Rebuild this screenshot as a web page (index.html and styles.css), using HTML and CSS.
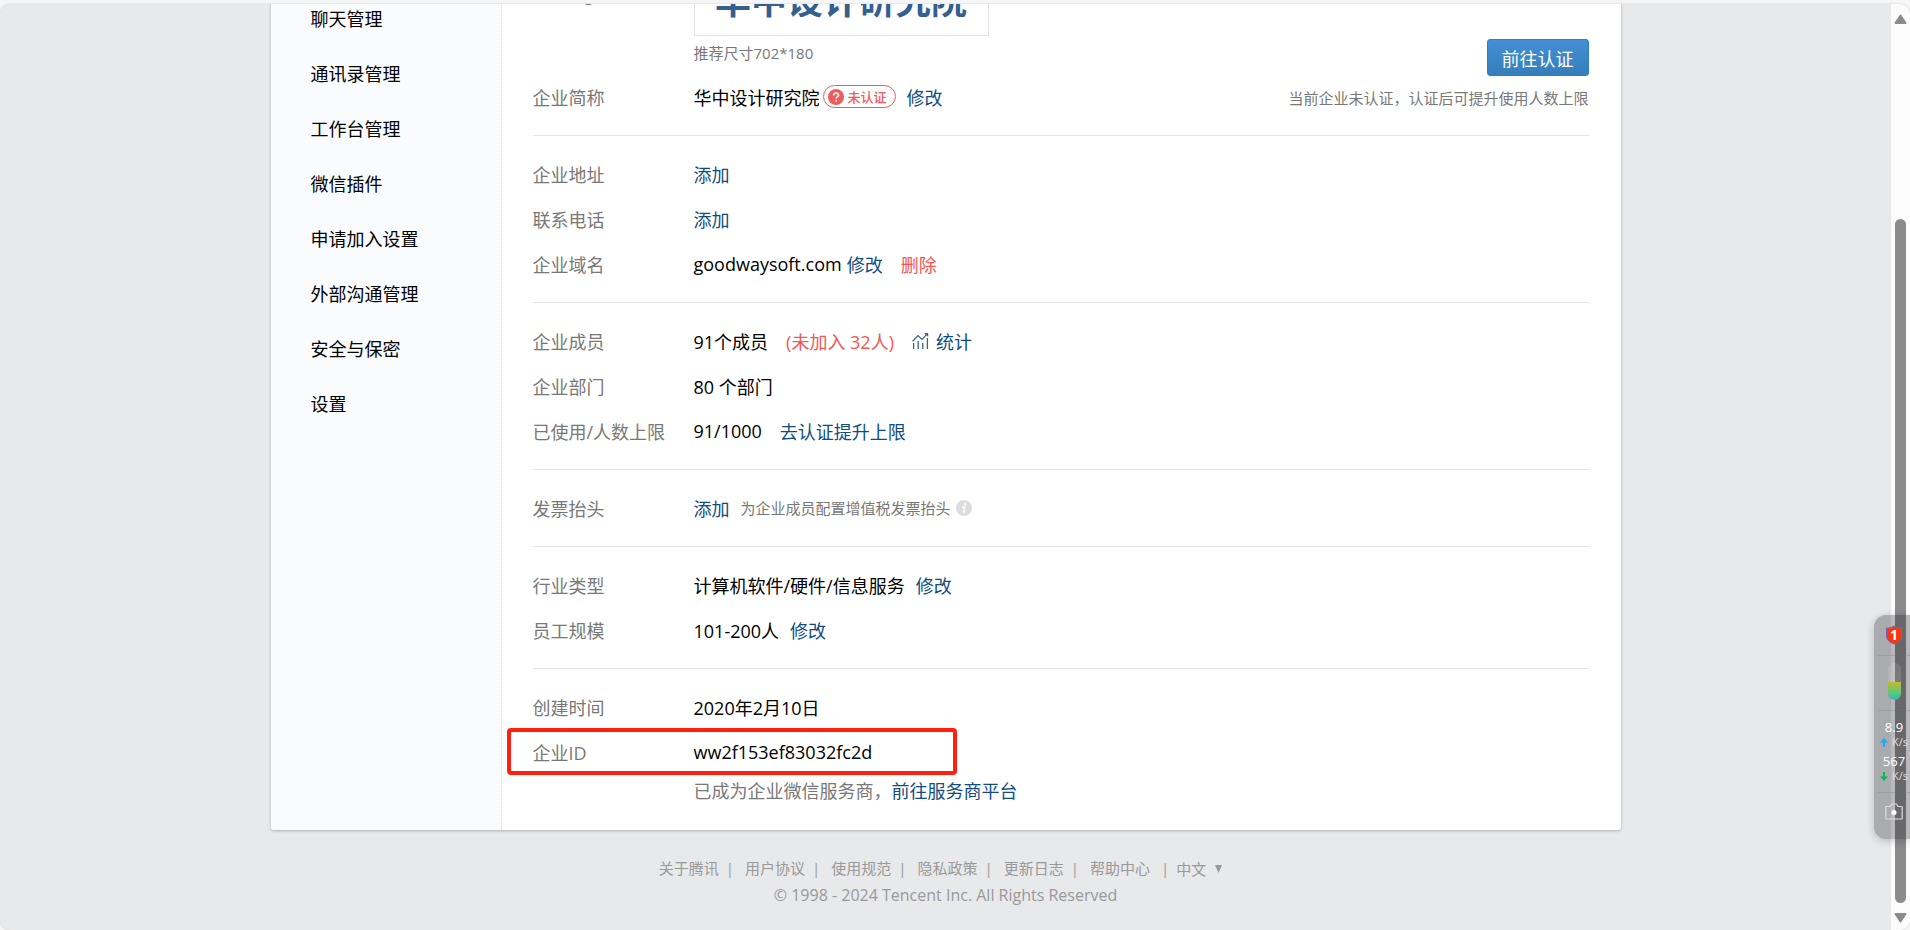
FILE: index.html
```html
<!DOCTYPE html>
<html lang="zh-CN">
<head>
    <meta charset="UTF-8">
    <meta name="viewport" content="width=device-width, initial-scale=1.0">
    <title>企业信息</title>
    <link rel="stylesheet" href="styles.css">
</head>
<body>
    <div class="window">
        <div class="page">
            <div class="card">
                <nav class="sidebar">
                    <a href="#">聊天管理</a>
                    <a href="#">通讯录管理</a>
                    <a href="#">工作台管理</a>
                    <a href="#">微信插件</a>
                    <a href="#">申请加入设置</a>
                    <a href="#">外部沟通管理</a>
                    <a href="#">安全与保密</a>
                    <a href="#">设置</a>
                </nav>
                <main class="content">
                    <section class="group group-head">
                        <div class="head-info">
                            <div class="row row-logo">
                                <div class="label">企业logo</div>
                                <div class="logo">华中设计研究院</div>
                            </div>
                            <p class="logo-tip">推荐尺寸702*180</p>
                            <div class="row">
                                <div class="label">企业简称</div>
                                <div class="value">
                                    <span>华中设计研究院</span>
                                    <span class="badge">
                                        <svg width="16" height="16" viewBox="0 0 16 16"><circle cx="8" cy="8" r="8" fill="#f05b5b"/><path d="M5.6 6.4c0-3.2 4.9-3.1 4.9-.2 0 1.7-2.4 1.7-2.4 3.4" fill="none" stroke="#fff" stroke-width="1.6"/><circle cx="8.1" cy="11.8" r="1" fill="#fff"/></svg>
                                        未认证
                                    </span>
                                    <a class="gap-md" href="#">修改</a>
                                </div>
                            </div>
                        </div>
                        <div class="verify">
                            <button type="button" class="verify-button">前往认证</button>
                            <p>当前企业未认证，认证后可提升使用人数上限</p>
                        </div>
                    </section>

                    <section class="group">
                        <div class="row">
                            <div class="label">企业地址</div>
                            <div class="value"><a href="#">添加</a></div>
                        </div>
                        <div class="row">
                            <div class="label">联系电话</div>
                            <div class="value"><a href="#">添加</a></div>
                        </div>
                        <div class="row">
                            <div class="label">企业域名</div>
                            <div class="value">
                                <span>goodwaysoft.com</span>
                                <a class="gap-sm" href="#">修改</a>
                                <a class="gap-lg danger" href="#">删除</a>
                            </div>
                        </div>
                    </section>

                    <section class="group">
                        <div class="row">
                            <div class="label">企业成员</div>
                            <div class="value">
                                <span>91个成员</span>
                                <span class="gap-lg danger">(未加入 32人)</span>
                                <a class="gap-lg stat" href="#">
                                    <svg width="17" height="17" viewBox="0 0 17 17" fill="none" stroke="#3a6486" stroke-width="1.3"><path d="M1.6 17v-6M6.2 17V9M10.8 17v-6M15.4 17V6"/><path d="M.6 9.2 6 3.6l4 3.8 5.6-6"/><path d="M12 .9h4.2v4.2z" fill="#3a6486" stroke="none"/></svg>
                                    统计
                                </a>
                            </div>
                        </div>
                        <div class="row">
                            <div class="label">企业部门</div>
                            <div class="value">80 个部门</div>
                        </div>
                        <div class="row">
                            <div class="label">已使用/人数上限</div>
                            <div class="value">
                                <span>91/1000</span>
                                <a class="gap-lg" href="#">去认证提升上限</a>
                            </div>
                        </div>
                    </section>

                    <section class="group">
                        <div class="row">
                            <div class="label">发票抬头</div>
                            <div class="value">
                                <a href="#">添加</a>
                                <span class="gap-md hint">为企业成员配置增值税发票抬头</span>
                                <svg class="info" width="16" height="16" viewBox="0 0 16 16"><circle cx="8" cy="8" r="8" fill="#dcdddf"/><circle cx="9" cy="4.2" r="1.2" fill="#fff"/><path d="M6.4 6.9h2.3l-1.2 5h1.6" fill="none" stroke="#fff" stroke-width="1.5"/></svg>
                            </div>
                        </div>
                    </section>

                    <section class="group">
                        <div class="row">
                            <div class="label">行业类型</div>
                            <div class="value">
                                <span>计算机软件/硬件/信息服务</span>
                                <a class="gap-md" href="#">修改</a>
                            </div>
                        </div>
                        <div class="row">
                            <div class="label">员工规模</div>
                            <div class="value">
                                <span>101-200人</span>
                                <a class="gap-md" href="#">修改</a>
                            </div>
                        </div>
                    </section>

                    <section class="group">
                        <div class="row">
                            <div class="label">创建时间</div>
                            <div class="value">2020年2月10日</div>
                        </div>
                        <div class="row marked">
                            <div class="label">企业ID</div>
                            <div class="value">ww2f153ef83032fc2d</div>
                        </div>
                        <p class="provider">已成为企业微信服务商，<a href="#">前往服务商平台</a></p>
                    </section>
                </main>
            </div>

            <footer class="footer">
                <div class="footer-links">
                    <a href="#">关于腾讯</a>
                    <a href="#">用户协议</a>
                    <a href="#">使用规范</a>
                    <a href="#">隐私政策</a>
                    <a href="#">更新日志</a>
                    <a href="#">帮助中心</a>
                    <label class="lang">
                        <select aria-label="语言">
                            <option>中文</option>
                        </select>
                        <svg width="7" height="8" viewBox="0 0 7 8"><path d="M0 0h7L3.5 8z" fill="#999"/></svg>
                    </label>
                </div>
                <p class="copyright">© 1998 - 2024 Tencent Inc. All Rights Reserved</p>
            </footer>
        </div>

        <div class="scrollbar">
            <svg width="13" height="10" viewBox="0 0 13 10"><path d="M6.5 1.5 11.5 9h-10z" fill="#8b8b8b" stroke="#8b8b8b" stroke-width="2" stroke-linejoin="round"/></svg>
            <div class="thumb"></div>
            <svg width="13" height="10" viewBox="0 0 13 10"><path d="M6.5 8.5 11.5 1h-10z" fill="#8b8b8b" stroke="#8b8b8b" stroke-width="2" stroke-linejoin="round"/></svg>
        </div>
    </div>

    <!-- Floating system monitor -->
    <aside class="monitor">
        <div class="monitor-cell cell-shield">
            <div class="shield">
                <svg width="18" height="20" viewBox="0 0 18 20"><path d="M9 1c2.5 1.7 5 2.2 7.5 2.2V11c0 4-3.5 6.5-7.5 8-4-1.5-7.5-4-7.5-8V3.2C4 3.2 6.5 2.7 9 1z" fill="#f7380f" stroke="#7a62b8"/></svg>
                <span>1</span>
            </div>
        </div>
        <div class="monitor-cell cell-memory"><div class="tube"></div></div>
        <div class="monitor-cell cell-speed">
            <b>8.9</b>
            <span><svg width="8" height="9" viewBox="0 0 8 9"><path d="M4 0 8 4.500H5V9H3V4.500H0z" fill="#18a8ff"/></svg>K/s</span>
            <b>567</b>
            <span><svg width="8" height="9" viewBox="0 0 8 9"><path d="M4 9 8 4.500H5V0H3v4.500H0z" fill="#0bb55c"/></svg>K/s</span>
        </div>
        <div class="monitor-cell cell-camera">
            <svg width="18" height="17" viewBox="0 0 18 17"><path d="M1.5 3.5H5L6.500 1h5L13 3.500h3.500q.7 0 .7.700v11q0 .8-.7.800h-15q-.7 0-.7-.8v-11q0-.7.7-.7z" fill="none" stroke="#dcdcdc" stroke-width="1.200"/><circle cx="9" cy="9.500" r="2.500" fill="#fff"/></svg>
        </div>
    </aside>
</body>
</html>
```
FILE: styles.css
```css
*,
*::after {
    box-sizing: border-box;
}
body {
    margin: 0;
    height: 100vh;
    padding-top: 4px;
    overflow: hidden;
    background: #f6f6f6;
    font-family: "Open Sans", "Noto Sans CJK SC", sans-serif;
    font-size: 18px;
    color: #000;
}
p {
    margin: 0;
}
a {
    color: #0f4c81;
    text-decoration: none;
}
svg {
    flex: none;
}
.window {
    display: flex;
    height: 100%;
    border-radius: 10px;
    overflow: hidden;
    background: #e8e9eb;
    box-shadow: 0 0 2px rgba(0, 0, 0, 0.2);
}
.page {
    flex: 1;
    overflow: hidden;
}

/* The page is scrolled down, so the card starts above the window */
.card {
    display: flex;
    max-width: 1350px;
    margin: -45px auto 0;
    background: #fff;
    border-radius: 3px;
    box-shadow: 0 1px 3px rgba(0, 0, 0, 0.25);
}
.sidebar {
    flex: none;
    width: 231px;
    padding-top: 33px;
    background: #f9fbfd;
    border-right: 1px dotted #d5dae0;
    border-radius: 3px 0 0 3px;
}
.sidebar a {
    display: block;
    padding-left: 40px;
    line-height: 55px;
    color: #000;
}
.content {
    flex: 1;
    padding: 0 32px 6px 31px;
}
.group {
    padding: 15px 0 16px;
    border-bottom: 1px solid #e4e5e7;
}
.group:last-child {
    border-bottom: none;
}
.group-head {
    display: flex;
    justify-content: space-between;
    align-items: flex-end;
    padding-top: 0;
}
.row {
    display: flex;
    align-items: center;
    height: 45px;
}
.label {
    flex: none;
    width: 161px;
    color: #787878;
}
.value {
    display: flex;
    align-items: center;
    white-space: nowrap;
}
.row-logo {
    align-items: flex-start;
    height: 77px;
    line-height: 71px;
}
.logo {
    width: 295px;
    height: 77px;
    border: 1px solid #e4e5e7;
    text-align: center;
    font-size: 36px;
    font-weight: 700;
    line-height: 81px;
    color: #345f8f;
}
.logo-tip {
    height: 38px;
    padding-left: 161px;
    font-size: 15px;
    line-height: 34px;
    color: #787878;
}
.badge {
    display: flex;
    align-items: center;
    gap: 4px;
    height: 23px;
    margin-left: 3px;
    padding: 0 8px 0 4px;
    border: 1px solid #f05b5b;
    border-radius: 12px;
    font-size: 13px;
    font-weight: 500;
    color: #f05b5b;
}
.gap-sm {
    margin-left: 5px;
}
.gap-md {
    margin-left: 11px;
}
.gap-lg {
    margin-left: 18px;
}
.danger {
    color: #f55753;
}
.stat {
    display: flex;
    align-items: center;
    gap: 7px;
}
.hint {
    font-size: 15px;
    color: #787878;
}
.info {
    margin-left: 5px;
}
.verify {
    display: flex;
    flex-direction: column;
    align-items: flex-end;
    gap: 2px;
    font-size: 15px;
    line-height: 41px;
    color: #787878;
}
.verify-button {
    height: 37px;
    padding: 0 14px;
    border: 1px solid #2e7fc4;
    border-radius: 3px;
    background: linear-gradient(#448fd6, #347fb9);
    color: #fff;
    font-family: inherit;
    font-size: 18px;
}

/* Red frame round the row with the ID */
.marked {
    position: relative;
}
.marked::after {
    content: "";
    position: absolute;
    top: -1px;
    bottom: -1px;
    left: -26px;
    width: 450px;
    border: 4px solid #ff2010;
    border-radius: 4px;
}
.provider {
    padding-left: 161px;
    line-height: 34px;
    color: #787878;
}

.footer {
    padding-top: 25px;
    text-align: center;
    font-size: 15px;
    line-height: 27px;
    color: #999;
}
.footer-links {
    display: flex;
    justify-content: center;
    padding-right: 10px;
}
.footer a {
    color: #999;
}
.footer-links a::after {
    content: "|";
    margin: 0 11px 0 7px;
}
.footer-links a:last-of-type::after {
    margin: 0 7px 0 11px;
}
.lang {
    display: flex;
    align-items: center;
    gap: 8px;
}
.lang select {
    appearance: none;
    padding: 0;
    border: none;
    background: none;
    color: #999;
    font-family: inherit;
    font-size: 15px;
}
.copyright {
    font-size: 16px;
}

.scrollbar {
    display: flex;
    flex-direction: column;
    align-items: center;
    width: 19px;
    padding: 10px 0 7px;
    background: #fcfcfc;
}
.thumb {
    flex: 1;
    width: 11px;
    margin: 195px 0 10px;
    border-radius: 6px;
    background: #8b8b8b;
}

.monitor {
    position: absolute;
    top: 615px;
    right: 0;
    width: 36px;
    padding-left: 4px;
    border-radius: 12px 0 0 12px;
    background: rgba(22, 22, 26, 0.29);
    box-shadow: 0 2px 8px rgba(0, 0, 0, 0.2);
    color: #fff;
}
.monitor-cell {
    display: flex;
    flex-direction: column;
    align-items: center;
    justify-content: center;
    border-bottom: 1px solid rgba(90, 120, 130, 0.25);
}
.cell-shield {
    height: 41px;
}
.cell-memory {
    height: 55px;
    padding-bottom: 4px;
}
.cell-speed {
    height: 82px;
    justify-content: flex-start;
    padding-top: 8px;
}
.cell-speed b {
    font-size: 13px;
    font-weight: 400;
    line-height: 16px;
}
.cell-speed span {
    display: flex;
    align-items: center;
    gap: 4px;
    margin-bottom: 4px;
    font-size: 11px;
    line-height: 14px;
    color: #dcdcdc;
}
.cell-camera {
    height: 46px;
    padding-bottom: 10px;
    border-bottom: none;
}
.shield {
    display: grid;
    place-items: center;
}
.shield svg,
.shield span {
    grid-area: 1 / 1;
}
.shield span {
    font-size: 14px;
    font-weight: 700;
    line-height: 20px;
}
.tube {
    width: 13px;
    height: 37px;
    border-radius: 7px;
    background: linear-gradient(rgba(255, 255, 255, 0.12) 50%, #c9b92c 50%, #5cc878 80%, #2fb9c4);
}
```
